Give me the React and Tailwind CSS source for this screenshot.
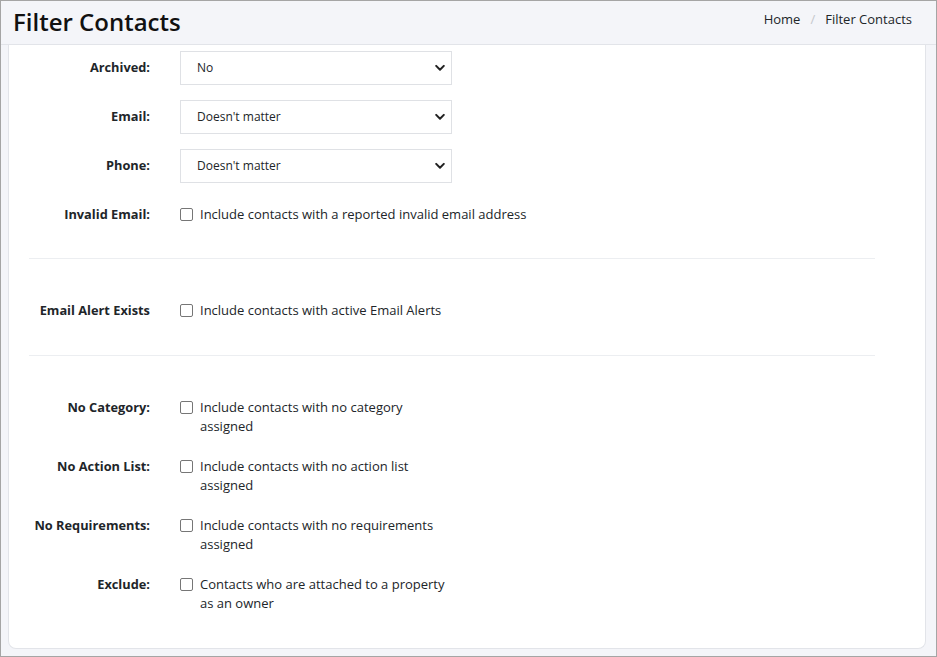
const fontStack = { fontFamily: '"Open Sans", "Noto Sans", sans-serif' };

function Chevron() {
  return (
    <svg className="pointer-events-none absolute right-[6px] top-1/2 -translate-y-1/2" width="10" height="7" viewBox="0 0 10 7" fill="none">
      <path d="M1.2 1.4 5 5.2 8.8 1.4" stroke="#222" strokeWidth="2" strokeLinecap="round" strokeLinejoin="round" />
    </svg>
  );
}

function SelectRow({ label, value, className }) {
  return (
    <div className={'flex items-center ' + className}>
      <div className="w-[141px] text-right text-[12.8px] font-bold text-[#212529]">{label}</div>
      <div className="relative ml-[30px] h-[34px] w-[272px] border border-[#dfe1e5] bg-white">
        <div className="flex h-full items-center pl-[16px] text-[12px] text-[#212529]">{value}</div>
        <Chevron />
      </div>
    </div>
  );
}

function CheckRow({ label, text, wrap, className }) {
  return (
    <div className={'flex items-start leading-[19px] ' + className}>
      <div className="w-[141px] text-right text-[12.8px] font-bold text-[#212529]">{label}</div>
      <div className="ml-[30px] flex items-start">
        <span className="mt-[3px] h-[13px] w-[13px] shrink-0 rounded-[2px] border border-[#767676] bg-white" />
        <span className={'ml-[7px] text-[13px] text-[#212529] ' + (wrap ? 'w-[252px]' : '')}>{text}</span>
      </div>
    </div>
  );
}

export default function App() {
  return (
    <div style={fontStack} className="flex h-[657px] w-[937px] flex-col overflow-hidden border border-[#a5a5a5] bg-[#f4f5f9]">
      <div className="flex h-[44px] shrink-0 items-center justify-between border-b border-[#e2e4e9] pl-[12px] pr-[24px]">
        <h1 className="-mt-[2px] text-[24px] font-semibold text-[#111]">Filter Contacts</h1>
        <nav className="-mt-[6px] flex items-center text-[13px] text-[#212529]">
          <span>Home</span>
          <span className="mx-[10px] text-[#c5c8cc]">/</span>
          <span>Filter Contacts</span>
        </nav>
      </div>
      <div className="flex-1 pb-[7px] pl-[7px] pr-[10px]">
        <div className="h-full rounded-b-[8px] border-x border-b border-[#e2e4e9] bg-white pt-[6px]">
          <SelectRow label="Archived:" value="No" className="mb-[15px]" />
          <SelectRow label="Email:" value="Doesn't matter" className="mb-[15px]" />
          <SelectRow label="Phone:" value="Doesn't matter" className="mb-[22px]" />
          <CheckRow label="Invalid Email:" text="Include contacts with a reported invalid email address" />
          <div className="mb-[42px] ml-[20px] mt-[34px] h-px w-[846px] bg-[#eceef1]" />
          <CheckRow label="Email Alert Exists" text="Include contacts with active Email Alerts" />
          <div className="mb-[42px] ml-[20px] mt-[35px] h-px w-[846px] bg-[#eceef1]" />
          <CheckRow label="No Category:" text="Include contacts with no category assigned" wrap className="mb-[21px]" />
          <CheckRow label="No Action List:" text="Include contacts with no action list assigned" wrap className="mb-[21px]" />
          <CheckRow label="No Requirements:" text="Include contacts with no requirements assigned" wrap className="mb-[21px]" />
          <CheckRow label="Exclude:" text="Contacts who are attached to a property as an owner" wrap />
        </div>
      </div>
    </div>
  );
}
